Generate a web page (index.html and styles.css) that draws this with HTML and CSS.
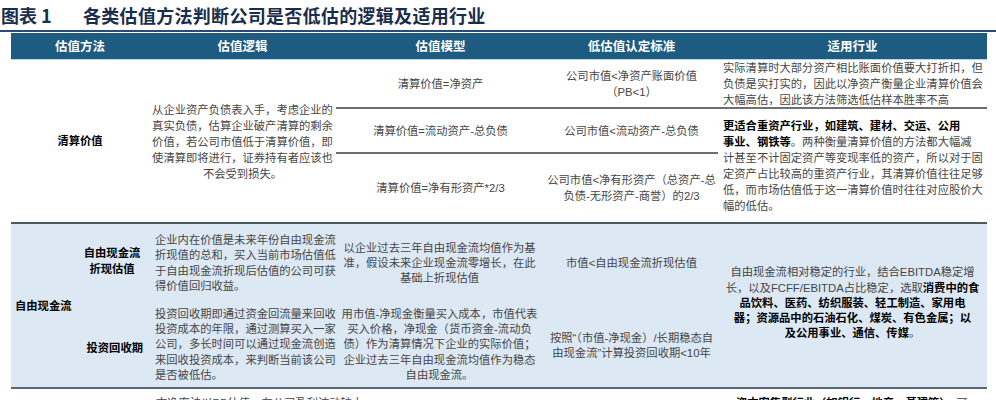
FILE: index.html
```html
<!DOCTYPE html>
<html lang="zh-CN">
<head>
<meta charset="utf-8">
<title>图表 1 各类估值方法判断公司是否低估的逻辑及适用行业</title>
<link rel="stylesheet" href="styles.css">
</head>
<body>
<div class="page">
  <h1 class="title"><span class="fig-label">图表 1</span><span class="fig-text">各类估值方法判断公司是否低估的逻辑及适用行业</span></h1>
  <div class="table">
    <div class="th c-method">估值方法</div>
    <div class="th c-logic">估值逻辑</div>
    <div class="th c-model">估值模型</div>
    <div class="th c-std">低估值认定标准</div>
    <div class="th c-ind">适用行业</div>

    <!-- 清算价值 -->
    <div class="td strong s1-method"><p>清算价值</p></div>
    <div class="td center s1-logic"><p>从企业资产负债表入手，考虑企业的<br>真实负债，估算企业破产清算的剩余<br>价值，若公司市值低于清算价值，即<br>使清算即将进行，证券持有者应该也<br>不会受到损失。</p></div>
    <div class="td center line s1a-model"><p>清算价值=净资产</p></div>
    <div class="td center line s1a-std"><p>公司市值&lt;净资产账面价值<br>（PB&lt;1）</p></div>
    <div class="td left line s1a-ind"><p>实际清算时大部分资产相比账面价值要大打折扣，但<br>负债是实打实的，因此以净资产衡量企业清算价值会<br>大幅高估，因此该方法筛选低估样本胜率不高</p></div>
    <div class="td center line s1b-model"><p>清算价值=流动资产-总负债</p></div>
    <div class="td center line s1b-std"><p>公司市值&lt;流动资产-总负债</p></div>
    <div class="td left s1bc-ind"><p><b>更适合重资产行业，如建筑、建材、交运、公用<br>事业、钢铁等</b>。两种衡量清算价值的方法都大幅减<br>计甚至不计固定资产等变现率低的资产，所以对于固<br>定资产占比较高的重资产行业，其清算价值往往足够<br>低，而市场估值低于这一清算价值时往往对应股价大<br>幅的低估。</p></div>
    <div class="td center s1c-model"><p>清算价值=净有形资产*2/3</p></div>
    <div class="td center s1c-std"><p>公司市值&lt;净有形资产（总资产-总<br>负债-无形资产-商誉）的2/3</p></div>

    <!-- 自由现金流 -->
    <div class="td strong blue s2-method"><p>自由现金流</p></div>
    <div class="td strong blue s2a-sub"><p>自由现金流<br>折现估值</p></div>
    <div class="td left blue tight s2a-logic"><p>企业内在价值是未来年份自由现金流<br>折现值的总和，买入当前市场估值低<br>于自由现金流折现后估值的公司可获<br>得价值回归收益。</p></div>
    <div class="td center blue tight s2a-model"><p>以企业过去三年自由现金流均值作为基<br>准，假设未来企业现金流零增长，在此<br>基础上折现估值</p></div>
    <div class="td center blue tight s2a-std"><p>市值&lt;自由现金流折现估值</p></div>
    <div class="td center blue tight s2-ind"><p>自由现金流相对稳定的行业，结合EBITDA稳定增<br>长，以及FCFF/EBITDA占比稳定，选取<b>消费中的食<br>品饮料、医药、纺织服装、轻工制造、家用电<br>器；资源品中的石油石化、煤炭、有色金属；以<br>及公用事业、通信、传媒</b>。</p></div>
    <div class="td strong blue s2b-sub"><p>投资回收期</p></div>
    <div class="td left blue tight s2b-logic"><p>投资回收期即通过资金回流量来回收<br>投资成本的年限，通过测算买入一家<br>公司，多长时间可以通过现金流创造<br>来回收投资成本，来判断当前该公司<br>是否被低估。</p></div>
    <div class="td center blue tight s2b-model"><p>用市值-净现金衡量买入成本，市值代表<br>买入价格，净现金（货币资金-流动负<br>债）作为清算情况下企业的实际价值；<br>企业过去三年自由现金流均值作为稳态<br>自由现金流。</p></div>
    <div class="td center blue tight s2b-std"><p>按照“（市值-净现金）/长期稳态自<br>由现金流”计算投资回收期&lt;10年</p></div>

    <!-- next row (cut off by the frame) -->
    <div class="td top s3-method"></div>
    <div class="td top left s3-logic"><p>市净率法以PB估值，在公司盈利波动较大</p></div>
    <div class="td top s3-model"></div>
    <div class="td top s3-std"></div>
    <div class="td top left s3-ind"><p>● <b>资本密集型行业（如银行、地产、基建等）</b>，可</p></div>
  </div>
</div>
</body>
</html>
```

FILE: styles.css
```css
* { box-sizing: border-box; }

html, body {
  margin: 0;
  padding: 0;
  background: #ffffff;
}

body {
  font-family: "Liberation Sans", "Noto Sans CJK SC", sans-serif;
  color: #464646;
  width: 996px;
  height: 400px;
  overflow: hidden;
}

p { margin: 0; }

.page {
  display: flex;
  flex-direction: column;
}

.title {
  margin: 0;
  height: 32px;
  padding-top: 1px;
  font-size: 18px;
  line-height: 28px;
  font-weight: 700;
  color: #1a2d4c;
  border-bottom: 2px solid #2b4a78;
  display: flex;
  white-space: nowrap;
  font-family: "Noto Sans CJK SC", sans-serif;
}

.fig-label {
  width: 83px;
  padding-left: 1px;
}

.fig-text {
  letter-spacing: 0.3px;
}

.table {
  margin: 1px 0 0 11px;
  width: 976px;
  display: grid;
  grid-template-columns: 64px 74px 187px 209px 173px 269px;
  grid-template-rows: 27px 49px 45px 70px 79px 86px 40px;
  font-size: 11.3px;
  line-height: 16px;
}

.th {
  background: #1d5b80;
  color: #ffffff;
  font-weight: 700;
  font-size: 12.5px;
  display: flex;
  align-items: center;
  justify-content: center;
  border-bottom: 1px solid #b9d4e8;
  grid-row: 1;
  font-family: "Noto Sans CJK SC", sans-serif;
}

.c-method { grid-column: 1 / 3; }
.c-logic { grid-column: 3; }
.c-model { grid-column: 4; }
.c-std { grid-column: 5; }
.c-ind { grid-column: 6; }

.td {
  display: flex;
  flex-direction: column;
  justify-content: center;
  white-space: nowrap;
  padding: 0 2px;
}

.td b,
.strong {
  color: #000000;
  font-weight: 700;
}

.center { text-align: center; align-items: center; }
.left { text-align: left; align-items: flex-start; }
.strong { text-align: center; align-items: center; }

.line { border-bottom: 2px solid #6f6f6f; }
.blue { background: #dce8f4; }
.tight { line-height: 15.3px; }
.top { justify-content: flex-start; padding-top: 6px; }

/* 清算价值 section */
.s1-method { grid-column: 1 / 3; grid-row: 2 / 5; border-bottom: 2px solid #4f5964; }
.s1-logic { grid-column: 3; grid-row: 2 / 5; border-bottom: 2px solid #4f5964; padding-top: 1px; }
.s1a-model { grid-column: 4; grid-row: 2; }
.s1a-std { grid-column: 5; grid-row: 2; }
.s1a-ind { grid-column: 6; grid-row: 2; padding-left: 5px; }
.s1b-model { grid-column: 4; grid-row: 3; }
.s1b-std { grid-column: 5; grid-row: 3; }
.s1bc-ind { grid-column: 6; grid-row: 3 / 5; padding-left: 5px; border-bottom: 2px solid #4f5964; }
.s1c-model { grid-column: 4; grid-row: 4; border-bottom: 2px solid #4f5964; }
.s1c-std { grid-column: 5; grid-row: 4; border-bottom: 2px solid #4f5964; }

/* 自由现金流 section */
.s2-method { grid-column: 1; grid-row: 5 / 7; align-items: flex-start; padding-left: 4px; border-bottom: 2px solid #5a6572; }
.s2a-sub { grid-column: 2; grid-row: 5; padding-bottom: 5px; }
.s2b-sub { grid-column: 2; grid-row: 6; align-items: flex-end; padding-right: 6px; padding-top: 6px; border-bottom: 2px solid #5a6572; }
.s2a-logic { grid-column: 3; grid-row: 5; padding-left: 6px; }
.s2b-logic { grid-column: 3; grid-row: 6; padding-left: 6px; border-bottom: 2px solid #5a6572; }
.s2a-model { grid-column: 4; grid-row: 5; padding-left: 0; }
.s2b-model { grid-column: 4; grid-row: 6; padding-left: 0; border-bottom: 2px solid #5a6572; }
.s2a-std { grid-column: 5; grid-row: 5; }
.s2b-std { grid-column: 5; grid-row: 6; border-bottom: 2px solid #5a6572; padding-top: 2px; }
.s2-ind { grid-column: 6; grid-row: 5 / 7; border-bottom: 2px solid #5a6572; padding-bottom: 4px; }

/* next row */
.s3-method { grid-column: 1 / 3; grid-row: 7; }
.s3-logic { grid-column: 3; grid-row: 7; padding-left: 7px; }
.s3-model { grid-column: 4; grid-row: 7; }
.s3-std { grid-column: 5; grid-row: 7; }
.s3-ind { grid-column: 6; grid-row: 7; padding-left: 8px; }
```
